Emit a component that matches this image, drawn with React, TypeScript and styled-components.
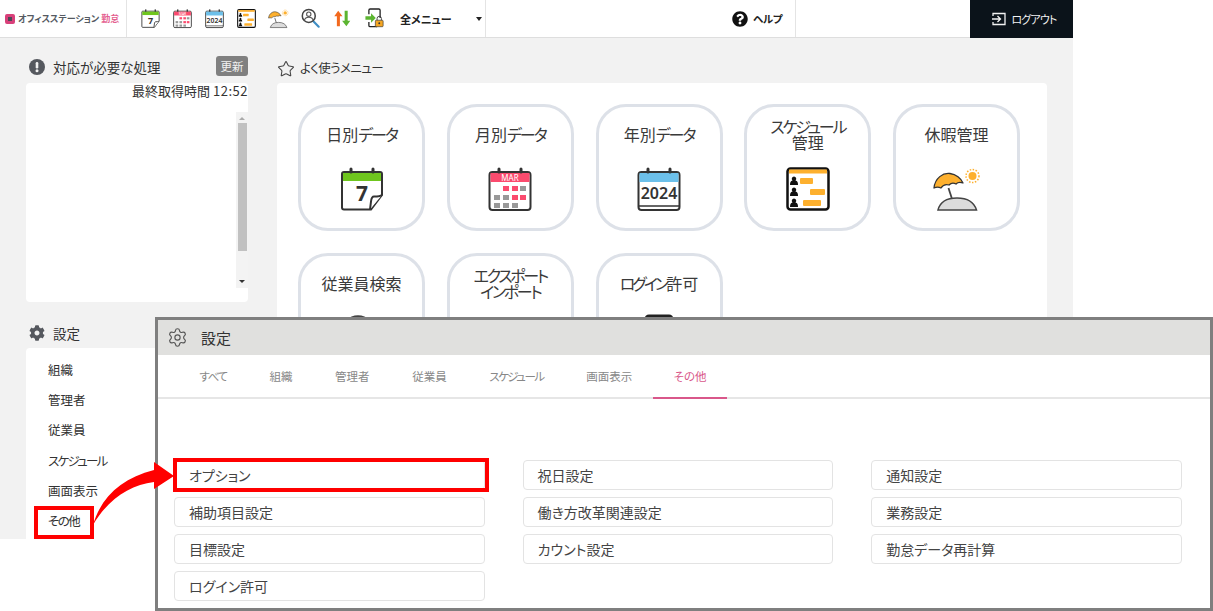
import React from "react";
import styled, { createGlobalStyle } from "styled-components";
import { FaCog, FaQuestionCircle } from "react-icons/fa";
import { Settings, Star } from "lucide-react";

const Global = createGlobalStyle`
  html, body { margin: 0; padding: 0; background: #fff; overflow: hidden; }
  body {
    font-family: "Noto Sans CJK JP", "Noto Sans", sans-serif;
    font-feature-settings: "palt";
    color: #333;
  }
`;

const Page = styled.div`
  position: relative;
  width: 1213px;
  height: 611px;
  overflow: hidden;
`;
const Shell = styled.div`
  width: 1073px;
  height: 539px;
  background: #f2f2f2;
  overflow: hidden;
`;
const Header = styled.header`
  display: flex;
  align-items: stretch;
  height: 38px;
  box-sizing: border-box;
  background: #fff;
  border-bottom: 1px solid #dedede;
`;
const LogoCell = styled.div`
  display: flex;
  align-items: center;
  width: 127px;
  box-sizing: border-box;
  padding-left: 5px;
  border-right: 1px solid #e4e4e4;
  white-space: nowrap;
`;
const LogoMark = styled.span`
  display: block;
  width: 10px;
  height: 10px;
  box-sizing: border-box;
  margin-right: 3px;
  border-radius: 2px;
  border: 3px solid #d8407a;
  background: #4a4a55;
`;
const LogoText = styled.span`
  font-size: 9px;
  font-weight: 700;
  color: #555a62;
`;
const LogoAccent = styled.span`
  font-size: 9px;
  font-weight: 700;
  color: #e4608f;
  margin-left: 2px;
`;
const IconBar = styled.div`
  display: flex;
  align-items: center;
  gap: 13px;
  padding-left: 14px;
`;
const MenuCell = styled.div`
  display: flex;
  align-items: center;
  width: 85px;
  margin-left: 16px;
  border-right: 1px solid #e4e4e4;
  font-size: 11px;
  font-weight: 700;
  color: #222;
  white-space: nowrap;
`;
const Caret = styled.span`
  width: 0;
  height: 0;
  margin-left: 24px;
  border: 3.5px solid transparent;
  border-top: 4.5px solid #222;
  border-bottom: 0;
`;
const HelpCell = styled.div`
  display: flex;
  align-items: center;
  gap: 5px;
  width: 63px;
  margin-left: 246px;
  border-right: 1px solid #e4e4e4;
  font-size: 10.5px;
  font-weight: 700;
  letter-spacing: -0.3px;
  color: #222;
`;
const LogoutButton = styled.div`
  display: flex;
  align-items: center;
  justify-content: center;
  gap: 5px;
  width: 103px;
  box-sizing: border-box;
  padding-left: 6px;
  margin-left: auto;
  margin-bottom: -1px;
  background: #0b131a;
  color: #f2f2f2;
  font-size: 11px;
  letter-spacing: -0.8px;
`;
const Main = styled.main`
  display: flex;
  align-items: flex-start;
  gap: 29px;
  padding: 18px 26px 0;
`;
const LeftColumn = styled.div`
  display: flex;
  flex-direction: column;
  width: 222px;
  flex: none;
`;
const RightColumn = styled.div`
  width: 770px;
  flex: none;
`;
const SectionTitle = styled.div<{ $top?: number }>`
  display: flex;
  align-items: center;
  gap: 8px;
  height: 22px;
  margin-top: ${(p) => p.$top ?? 0}px;
  margin-bottom: ${(p) => (p.$top ? 4 : 5)}px;
  padding-left: 3px;
  font-size: 13.5px;
  color: #333;
  & > svg { color: #55585e; flex: none; }
`;
const QuickTitle = styled.div`
  display: flex;
  align-items: center;
  gap: 5px;
  height: 22px;
  margin-bottom: 5px;
  font-size: 12.5px;
  letter-spacing: -0.6px;
  color: #333;
  & > svg { color: #444; flex: none; margin-top: 3px; }
`;
const RefreshButton = styled.span`
  margin-left: auto;
  align-self: flex-start;
  width: 32px;
  height: 20px;
  line-height: 20px;
  text-align: center;
  background: #808080;
  border-radius: 3px;
  color: #f1f1f1;
  font-size: 11.5px;
`;
const AlertCard = styled.section`
  display: flex;
  flex-direction: column;
  height: 219px;
  background: #fff;
  border-radius: 4px;
`;
const Fetched = styled.div`
  height: 29px;
  line-height: 16px;
  text-align: right;
  font-size: 13px;
  color: #333;
`;
const Scrollbar = styled.div`
  display: flex;
  flex-direction: column;
  align-items: center;
  align-self: flex-end;
  justify-content: space-between;
  width: 12px;
  height: 176px;
  box-sizing: border-box;
  padding: 5px 0;
  background: #f3f3f3;
`;
const ScrollUp = styled.span`
  border: 3px solid transparent;
  border-bottom: 3px solid #aaa;
  border-top: 0;
`;
const ScrollDown = styled.span`
  border: 3px solid transparent;
  border-top: 3px solid #333;
  border-bottom: 0;
`;
const ScrollThumb = styled.span`
  width: 9px;
  height: 128px;
  margin-bottom: 26px;
  background: #c1c1c1;
`;
const SettingsCard = styled.nav`
  height: 191px;
  padding-top: 7px;
  box-sizing: border-box;
  background: #fff;
  border-radius: 4px 4px 0 0;
`;
const SettingsLink = styled.div<{ $marked?: boolean }>`
  position: relative;
  height: 30.2px;
  line-height: 30px;
  padding-left: 22px;
  font-size: 12.5px;
  color: #333;
  ${(p) =>
    p.$marked
      ? `&::after {
          content: "";
          position: absolute;
          left: 8px;
          top: 0;
          width: 60px;
          height: 33px;
          box-sizing: border-box;
          border: 4px solid #f00;
        }`
      : ""}
`;
const Kana = styled.span<{ $tight: number }>`
  display: inline-block;
  letter-spacing: ${(p) => p.$tight}px;
`;
const QuickCard = styled.section`
  display: grid;
  grid-template-columns: repeat(5, 127px);
  grid-auto-rows: 127px;
  column-gap: 21.75px;
  row-gap: 22px;
  padding: 21px;
  background: #fff;
  border-radius: 4px;
`;
const Tile = styled.div`
  display: flex;
  flex-direction: column;
  align-items: center;
  box-sizing: border-box;
  padding-top: 7px;
  background: #fff;
  border: 3px solid #dde1e8;
  border-radius: 30px;
`;
const TileLabel = styled.div`
  display: flex;
  align-items: center;
  justify-content: center;
  height: 40px;
  margin-bottom: 13px;
`;
const TileText = styled.div`
  text-align: center;
  white-space: nowrap;
  font-size: 16px;
  line-height: 16.5px;
  color: #3a3a3a;
`;
const Window = styled.aside`
  position: absolute;
  left: 155px;
  top: 317px;
  width: 1058px;
  height: 294px;
  box-sizing: border-box;
  display: flex;
  flex-direction: column;
  background: #fff;
  border: 3px solid #7f7f7f;
`;
const WindowTitle = styled.div`
  display: flex;
  align-items: center;
  gap: 13px;
  height: 35px;
  flex: none;
  padding: 0 0 0 9px;
  background: #e0e0de;
  font-size: 15px;
  color: #333;
  & > svg { color: #555; }
`;
const TabRow = styled.div`
  display: flex;
  height: 44px;
  flex: none;
  box-sizing: border-box;
  padding-left: 20px;
  border-bottom: 2px solid #e6e6e6;
`;
const TabItem = styled.div<{ $active?: boolean }>`
  height: 44px;
  line-height: 43px;
  box-sizing: border-box;
  padding: 0 ${(p) => (p.$active ? "20.5px" : "21.3px")};
  margin-left: ${(p) => (p.$active ? "-0.5px" : "0")};
  font-size: 11.5px;
  color: ${(p) => (p.$active ? "#d9578a" : "#888")};
  border-bottom: ${(p) => (p.$active ? "2px solid #d9578a" : "0")};
`;
const OptionGrid = styled.div`
  display: grid;
  grid-template-columns: repeat(3, 310.6px);
  grid-auto-rows: 30px;
  column-gap: 38px;
  row-gap: 7px;
  padding: 61px 0 0 16px;
`;
const OptionItem = styled.div<{ $marked?: boolean; $row: number; $col: number }>`
  position: relative;
  grid-row: ${(p) => p.$row};
  grid-column: ${(p) => p.$col};
  box-sizing: border-box;
  padding-left: 14px;
  line-height: 28px;
  font-size: 14px;
  color: #444;
  border: 1px solid #e3e3e3;
  border-radius: 4px;
  ${(p) =>
    p.$marked
      ? `&::after {
          content: "";
          position: absolute;
          left: -2px;
          right: -5px;
          top: -3px;
          bottom: -3px;
          border: 4px solid #f00;
        }`
      : ""}
`;
const ArrowLayer = styled.svg`
  position: absolute;
  left: 0;
  top: 0;
  pointer-events: none;
`;

type IconProps = { size: number };
const Box = ({ size, children }: IconProps & { children: React.ReactNode }) => (
  <svg width={size} height={size} viewBox="0 0 44 44" style={{ flex: "none", overflow: "visible" }}>
    {children}
  </svg>
);
const Pegs = () => (
  <>
    <rect x="9.5" y="0.5" width="3" height="6" rx="1.5" fill="#333" />
    <rect x="31.5" y="0.5" width="3" height="6" rx="1.5" fill="#333" />
  </>
);
const DayIcon = ({ size }: IconProps) => (
  <Box size={size}>
    <path d="M4 5h36a2 2 0 0 1 2 2v21L31 42.5H4a2 2 0 0 1-2-2V7a2 2 0 0 1 2-2z" fill="#fff" stroke="#333" strokeWidth="2" />
    <rect x="3" y="6" width="38" height="8" fill="#6fc61e" />
    <Pegs />
    <path d="M42 28c-1 1-2 1.500-8 1.500-1.500 0-2.500 1-3 5l-1 8" fill="#fff" stroke="#333" strokeWidth="2" />
    <text x="22" y="34" textAnchor="middle" fontSize="21" fontWeight="700" fill="#333" fontFamily="Noto Sans, sans-serif">7</text>
  </Box>
);
const MonthIcon = ({ size }: IconProps) => {
  const cells: [number, number, string][] = [
    [15, 19, "#fb4b6e"], [24, 19, "#fb4b6e"], [32, 19, "#999"],
    [6, 28, "#999"], [15, 28, "#999"], [24, 28, "#fb4b6e"], [32, 28, "#fb4b6e"],
    [6, 36, "#999"], [15, 36, "#999"], [24, 36, "#999"],
  ];
  return (
    <Box size={size}>
      <rect x="1.500" y="5" width="41" height="38" rx="3" fill="#fff" stroke="#333" strokeWidth="2" />
      <rect x="2.500" y="6" width="39" height="9" fill="#fb4b6e" />
      <Pegs />
      <text x="22" y="13.500" textAnchor="middle" fontSize="8" fill="#fff" fontFamily="Noto Sans, sans-serif">MAR</text>
      {cells.map(([x, y, c]) => (
        <rect key={`${x}-${y}`} x={x} y={y} width="6" height="5" fill={c} />
      ))}
    </Box>
  );
};
const YearIcon = ({ size }: IconProps) => (
  <Box size={size}>
    <rect x="1.500" y="5" width="41" height="38" rx="3" fill="#fff" stroke="#333" strokeWidth="2" />
    <rect x="2.500" y="6" width="39" height="9" fill="#6cc0ea" />
    <path d="M2 39h40" stroke="#333" strokeWidth="1.500" />
    <Pegs />
    <text x="22" y="32" textAnchor="middle" fontSize="16" fontWeight="600" fill="#333" fontFamily="Noto Sans, sans-serif">2024</text>
  </Box>
);
const Person = ({ y }: { y: number }) => (
  <path d={`M8 ${y - 4.500}a2.300 2.300 0 0 1 1.500 4c2 .8 2.500 1.500 2.500 4.500H4c0-3 .5-3.700 2.500-4.500A2.300 2.300 0 0 1 8 ${y - 4.500}z`} fill="#111" />
);
const ScheduleIcon = ({ size }: IconProps) => (
  <Box size={size}>
    <rect x="1.500" y="1.500" width="41" height="41" rx="3" fill="#fff" stroke="#111" strokeWidth="2.500" />
    <rect x="3" y="2.500" width="38" height="4" fill="#fdb02e" />
    <Person y={14} />
    <Person y={25} />
    <Person y={36} />
    <rect x="14" y="11" width="13" height="6" rx="1" fill="#fdb02e" />
    <rect x="24" y="22" width="15" height="6" rx="1" fill="#fdb02e" />
    <rect x="17" y="33" width="18" height="6" rx="1" fill="#fdb02e" />
  </Box>
);
const VacationIcon = ({ size }: IconProps) => (
  <Box size={size}>
    <circle cx="37.500" cy="9" r="4" fill="#fdb02e" />
    <circle cx="37.500" cy="9" r="6.500" fill="none" stroke="#fdb02e" strokeWidth="1.500" strokeDasharray="1.500 1.500" />
    <path d="M13.500 21l3.500 11" stroke="#444" strokeWidth="1.800" />
    <path d="M-1 21C0 11 8 5.500 15 6.500c6 .8 11 5 13 9.500-3-1-5-1-7 1-2-1-5-1-7 1-3-1-6 0-8 3-2-1-5-1-7 0z" fill="#fdb02e" stroke="#333" strokeWidth="1.300" strokeLinejoin="round" />
    <path d="M3 43c2-8 9-12 19-12s17 4 19.500 12z" fill="#dcdcdc" stroke="#444" strokeWidth="1.500" />
  </Box>
);
const SearchIcon = ({ size }: IconProps) => (
  <Box size={size}>
    <path d="M28 28l13 13" stroke="#3f8ec4" strokeWidth="5" strokeLinecap="round" />
    <circle cx="18" cy="16" r="15" fill="#fff" stroke="#444" strokeWidth="3.500" />
    <circle cx="18" cy="12" r="5" fill="#fff" stroke="#555" strokeWidth="2.500" />
    <path d="M8 26c1-5 5-7 10-7s9 2 10 7" fill="none" stroke="#555" strokeWidth="2.500" />
  </Box>
);
const ExportIcon = ({ size }: IconProps) => (
  <Box size={size}>
    <path d="M12 4L3 17h6v23h7V17h6z" fill="#f2691e" />
    <path d="M31 40l9-13h-6V4h-7v23h-6z" fill="#5cb531" />
  </Box>
);
const LoginIcon = ({ size }: IconProps) => (
  <Box size={size}>
    <path d="M9 12V3a3 3 0 0 1 3-3h20a3 3 0 0 1 3 3v18M28 41H12a3 3 0 0 1-3-3v-8" fill="none" stroke="#222" strokeWidth="3" />
    <path d="M1 17h13V10l11 11-11 11v-7H1z" fill="#5cb531" />
    <rect x="24" y="26" width="18" height="15" rx="2" fill="#f5a623" stroke="#333" strokeWidth="1.500" />
    <path d="M28 26v-4a5 5 0 0 1 10 0v4" fill="none" stroke="#333" strokeWidth="2" />
    <circle cx="33" cy="33" r="2.200" fill="#333" />
  </Box>
);
const AlertIcon = () => (
  <svg width="16" height="16" viewBox="0 0 16 16">
    <circle cx="8" cy="8" r="8" fill="currentColor" />
    <rect x="6.700" y="3" width="2.600" height="6.500" rx="1.200" fill="#f2f2f2" />
    <circle cx="8" cy="11.800" r="1.500" fill="#f2f2f2" />
  </svg>
);
const LogoutIcon = () => (
  <svg width="14" height="14" viewBox="0 0 14 14" fill="none" stroke="#f2f2f2" strokeWidth="1.300">
    <path d="M1 4V1.500h12v11H1V10" />
    <path d="M0 7h8M5.500 4l3 3-3 3" />
  </svg>
);

const headerIcons = [DayIcon, MonthIcon, YearIcon, ScheduleIcon, VacationIcon, SearchIcon, ExportIcon, LoginIcon];
const tiles: { label: React.ReactNode; Icon: React.FC<IconProps> }[] = [
  { label: <>日別<Kana $tight={-2}>データ</Kana></>, Icon: DayIcon },
  { label: <>月別<Kana $tight={-2}>データ</Kana></>, Icon: MonthIcon },
  { label: <>年別<Kana $tight={-2}>データ</Kana></>, Icon: YearIcon },
  { label: <><Kana $tight={-2.2}>スケジュール</Kana><br />管理</>, Icon: ScheduleIcon },
  { label: "休暇管理", Icon: VacationIcon },
  { label: "従業員検索", Icon: SearchIcon },
  { label: <><Kana $tight={-2.3}>エクスポート</Kana><br /><Kana $tight={-2.3}>インポート</Kana></>, Icon: ExportIcon },
  { label: <><Kana $tight={-3}>ログイン</Kana>許可</>, Icon: LoginIcon },
];
const settingsLinks: [string, number][] = [["組織", 0], ["管理者", 0], ["従業員", 0], ["スケジュール", -1.7], ["画面表示", 0], ["その他", -1.5]];
const tabs: [string, number][] = [["すべて", -1.3], ["組織", 0], ["管理者", 0], ["従業員", 0], ["スケジュール", -1.5], ["画面表示", 0], ["その他", 0]];
const options: [string, number, number][] = [
  ["オプション", 1, 1], ["補助項目設定", 2, 1], ["目標設定", 3, 1], ["ログイン許可", 4, 1],
  ["祝日設定", 1, 2], ["働き方改革関連設定", 2, 2], ["カウント設定", 3, 2],
  ["通知設定", 1, 3], ["業務設定", 2, 3], ["勤怠データ再計算", 3, 3],
];

export default function App() {
  return (
    <Page>
      <Global />
      <Shell>
        <Header>
          <LogoCell>
            <LogoMark />
            <LogoText>オフィスステーション</LogoText>
            <LogoAccent>勤怠</LogoAccent>
          </LogoCell>
          <IconBar>
            {headerIcons.map((Icon, i) => (
              <Icon key={i} size={19} />
            ))}
          </IconBar>
          <MenuCell>
            全メニュー
            <Caret />
          </MenuCell>
          <HelpCell>
            <FaQuestionCircle size={16} color="#111" />
            ヘルプ
          </HelpCell>
          <LogoutButton>
            <LogoutIcon />
            ログアウト
          </LogoutButton>
        </Header>
        <Main>
          <LeftColumn>
            <SectionTitle>
              <AlertIcon />
              対応が必要な処理
              <RefreshButton>更新</RefreshButton>
            </SectionTitle>
            <AlertCard>
              <Fetched>最終取得時間 <Kana $tight={0.5}>12:52</Kana></Fetched>
              <Scrollbar>
                <ScrollUp />
                <ScrollThumb />
                <ScrollDown />
              </Scrollbar>
            </AlertCard>
            <SectionTitle $top={20}>
              <FaCog size={16} />
              設定
            </SectionTitle>
            <SettingsCard>
              {settingsLinks.map(([s, t]) => (
                <SettingsLink key={s} $marked={s === "その他"}>
                  <Kana $tight={t}>{s}</Kana>
                </SettingsLink>
              ))}
            </SettingsCard>
          </LeftColumn>
          <RightColumn>
            <QuickTitle>
              <Star size={18} strokeWidth={1.4} />
              よく使うメニュー
            </QuickTitle>
            <QuickCard>
              {tiles.map(({ label, Icon }, i) => (
                <Tile key={i}>
                  <TileLabel>
                    <TileText>{label}</TileText>
                  </TileLabel>
                  <Icon size={44} />
                </Tile>
              ))}
            </QuickCard>
          </RightColumn>
        </Main>
      </Shell>
      <Window>
        <WindowTitle>
          <Settings size={21} strokeWidth={1.3} />
          設定
        </WindowTitle>
        <TabRow>
          {tabs.map(([t, k]) => (
            <TabItem key={t} $active={t === "その他"}>
              <Kana $tight={k}>{t}</Kana>
            </TabItem>
          ))}
        </TabRow>
        <OptionGrid>
          {options.map(([label, row, col]) => (
            <OptionItem key={label} $row={row} $col={col} $marked={label === "オプション"}>
              {label}
            </OptionItem>
          ))}
        </OptionGrid>
      </Window>
      <ArrowLayer width="1213" height="611" viewBox="0 0 1213 611">
        <path d="M93 525C101 497 122 478 154 470V462L174 476 154 489V482C130 485 108 499 93 525z" fill="#f00" />
      </ArrowLayer>
    </Page>
  );
}
